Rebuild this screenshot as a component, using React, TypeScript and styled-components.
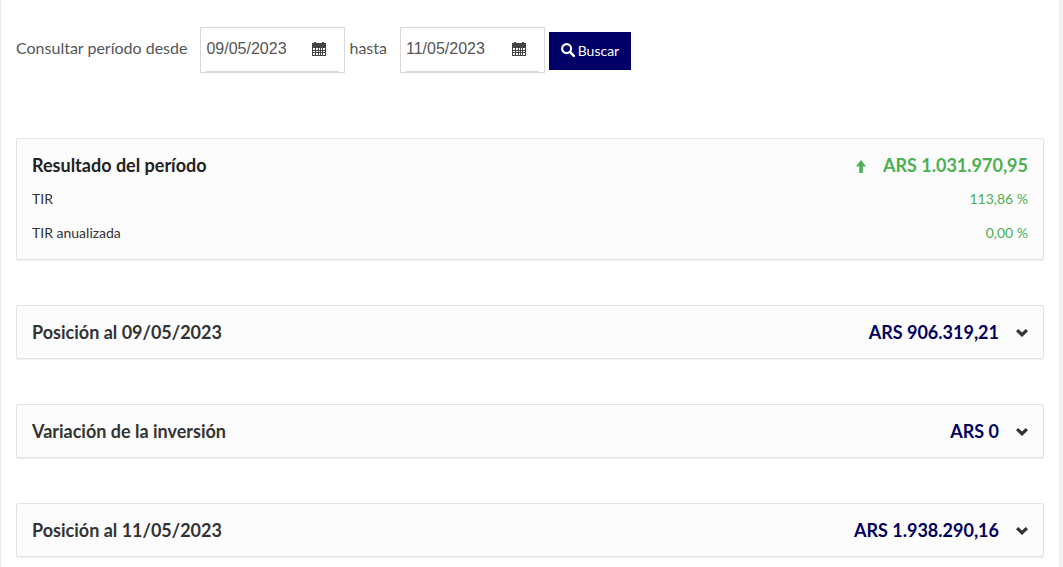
import React, { useState } from "react";
import styled, { createGlobalStyle } from "styled-components";

const GlobalStyle = createGlobalStyle`
  *, *::before, *::after { box-sizing: border-box; }
  body {
    margin: 0;
    background: #f1f1f1;
    font-family: Lato, "Open Sans", sans-serif;
    font-size: 14px;
    color: #333;
  }
`;

const Page = styled.main`
  min-height: 100vh;
  margin-right: 4px;
  padding: 27px 15px 10px;
  border-left: 1px solid #e7e7e7;
  background: #fff;
`;

const FilterForm = styled.form`
  display: flex;
  align-items: center;
  gap: 4px;
  margin-bottom: 65px;
`;

const FilterLabel = styled.label`
  margin-right: 9px;
  padding-bottom: 5px;
  font-size: 16px;
  line-height: 20px;
  color: #555;
  white-space: nowrap;
`;

const DateBox = styled.div`
  width: 145px;
  height: 46px;
  padding: 0 5px;
  border: 1px solid #d9d9d9;
`;

const DateField = styled.div`
  display: flex;
  align-items: center;
  height: 44px;
  padding-bottom: 2px;
  border-bottom: 1px solid #d9d9d9;
`;

const DateInput = styled.input`
  flex: 1;
  min-width: 0;
  height: 40px;
  padding: 0;
  border: 0;
  outline: 0;
  background: transparent;
  font-family: "Liberation Sans", Arial, sans-serif;
  font-size: 16px;
  color: #555;
`;

const IconButton = styled.button`
  display: flex;
  padding: 0;
  margin-right: 13px;
  border: 0;
  background: transparent;
  color: #444;
  cursor: pointer;
`;

const SearchButton = styled.button`
  display: flex;
  align-items: center;
  justify-content: center;
  gap: 3px;
  width: 82px;
  height: 38px;
  margin-top: 2px;
  padding: 0 0 2px;
  border: 0;
  background: #006;
  color: #fff;
  font-family: inherit;
  font-size: 14px;
  cursor: pointer;
`;

const CardList = styled.div`
  display: flex;
  flex-direction: column;
  gap: 45px;
`;

const Card = styled.section`
  padding: 9px 15px;
  border: 1px solid #e3e3e3;
  border-radius: 2px;
  background: #fcfcfc;
  box-shadow: 0 1px 1px rgba(0, 0, 0, 0.07);
`;

const Row = styled.div`
  display: flex;
  align-items: center;
  justify-content: space-between;
  height: 34px;
`;

const DetailRow = styled(Row)`
  padding-bottom: 2px;
`;

const Title = styled.h2`
  margin: 0;
  font-size: 18px;
  font-weight: 700;
  color: #222;
`;

const Gain = styled.span`
  color: #4caf50;
`;

const GainTotal = styled.strong`
  display: flex;
  align-items: center;
  gap: 17px;
  font-size: 18px;
  font-weight: 700;
  color: #4caf50;
`;

const Toggle = styled.button`
  display: flex;
  align-items: center;
  justify-content: space-between;
  width: 100%;
  height: 34px;
  padding: 0;
  border: 0;
  background: transparent;
  color: #333;
  font-family: inherit;
  font-size: 18px;
  font-weight: 700;
  cursor: pointer;
`;

const Amount = styled.span`
  display: flex;
  align-items: center;
  gap: 17px;
  color: #00005c;
`;

const CalendarIcon = () => (
  <svg width="14" height="14" viewBox="0 0 14 14" fill="currentColor" aria-hidden="true">
    <path d="M2 0h2v1h6V0h2v1h2v3H0V1h2z" />
    <path
      fillRule="evenodd"
      d="M0 4h14v10H0zM1 6v2h2V6zM4 6v2h2V6zM7 6v2h1V6zM9 6v2h1V6zM11 6v2h2V6zM1 9v1h2V9zM4 9v1h2V9zM7 9v1h1V9zM9 9v1h1V9zM11 9v1h2V9zM1 11v2h2v-2zM4 11v2h2v-2zM7 11v2h1v-2zM9 11v2h1v-2zM11 11v2h2v-2z"
    />
  </svg>
);

const SearchIcon = () => (
  <svg width="14" height="14" viewBox="0 0 14 14" fill="none" stroke="currentColor" aria-hidden="true">
    <circle cx="5.6" cy="5.6" r="4.5" strokeWidth="2.1" />
    <path d="M9 9l3.8 3.8" strokeWidth="2.5" strokeLinecap="round" />
  </svg>
);

const ArrowUpIcon = () => (
  <svg width="10" height="15" viewBox="0 0 10 15" fill="currentColor" aria-hidden="true">
    <path d="M5 2l5 6.5H6.8V15H3.2V8.5H0z" />
  </svg>
);

const ChevronIcon = () => (
  <svg width="12" height="10" viewBox="0 0 12 10" fill="#333" aria-hidden="true">
    <path d="M2.2 2L6 5.6 9.8 2 12 4.2 6 10 0 4.2z" />
  </svg>
);

function DateControl({ id, initial, name }: { id: string; initial: string; name: string }) {
  const [value, setValue] = useState(initial);
  return (
    <DateBox>
      <DateField>
        <DateInput id={id} value={value} onChange={(e) => setValue(e.target.value)} />
        <IconButton type="button" aria-label={name}>
          <CalendarIcon />
        </IconButton>
      </DateField>
    </DateBox>
  );
}

const positions = [
  { title: "Posición al 09/05/2023", amount: "ARS 906.319,21" },
  { title: "Variación de la inversión", amount: "ARS 0" },
  { title: "Posición al 11/05/2023", amount: "ARS 1.938.290,16" },
];

export default function App() {
  return (
    <>
      <GlobalStyle />
      <Page>
        <FilterForm onSubmit={(e) => e.preventDefault()}>
          <FilterLabel htmlFor="desde">Consultar período desde</FilterLabel>
          <DateControl id="desde" initial="09/05/2023" name="Elegir fecha desde" />
          <FilterLabel htmlFor="hasta">hasta</FilterLabel>
          <DateControl id="hasta" initial="11/05/2023" name="Elegir fecha hasta" />
          <SearchButton type="submit">
            <SearchIcon />
            Buscar
          </SearchButton>
        </FilterForm>
        <CardList>
          <Card>
            <Row>
              <Title>Resultado del período</Title>
              <GainTotal>
                <ArrowUpIcon />
                ARS 1.031.970,95
              </GainTotal>
            </Row>
            <DetailRow>
              <span>TIR</span>
              <Gain>113,86 %</Gain>
            </DetailRow>
            <DetailRow>
              <span>TIR anualizada</span>
              <Gain>0,00 %</Gain>
            </DetailRow>
          </Card>
          {positions.map((p) => (
            <Card key={p.title}>
              <Toggle type="button" aria-expanded={false}>
                {p.title}
                <Amount>
                  {p.amount}
                  <ChevronIcon />
                </Amount>
              </Toggle>
            </Card>
          ))}
        </CardList>
      </Page>
    </>
  );
}
